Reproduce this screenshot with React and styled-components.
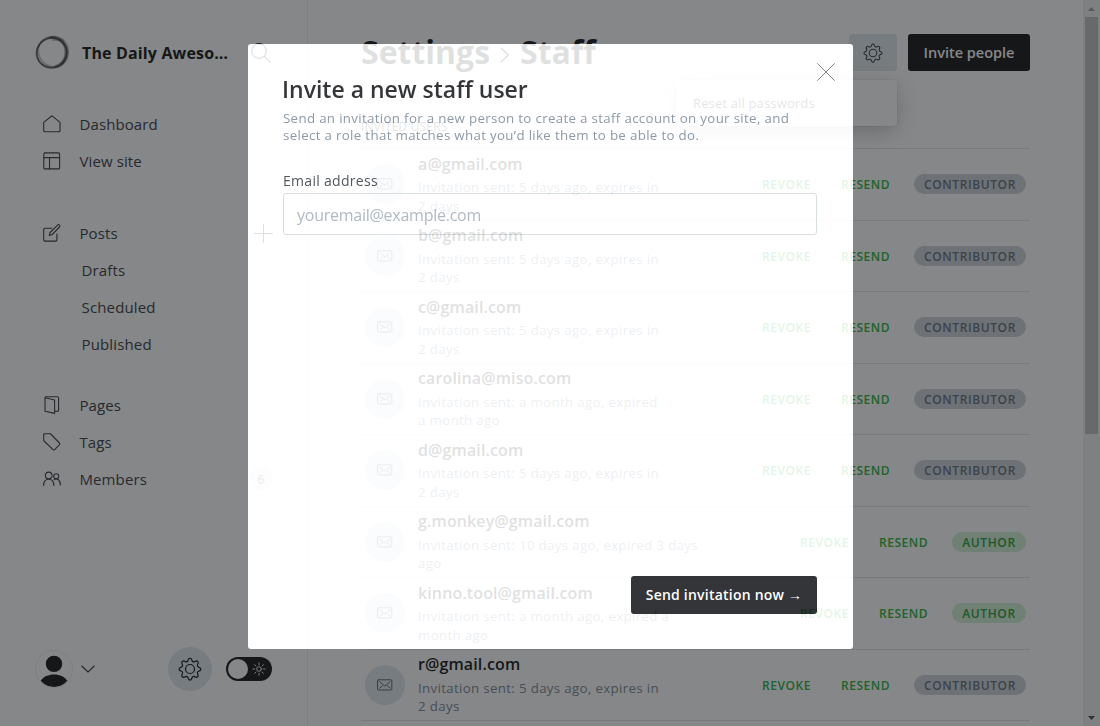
import React from "react";
import styled, { createGlobalStyle, css } from "styled-components";

const Global = createGlobalStyle`
  *, *::before, *::after { box-sizing: border-box; }
  html, body { margin: 0; padding: 0; height: 726px; overflow: hidden; }
  body {
    background: #fff;
    color: #15171a;
    font-family: "Open Sans", "Noto Sans", sans-serif;
    font-size: 15px;
  }
`;

const Page = styled.div`
  display: flex;
  width: 1100px;
  height: 726px;
  overflow: hidden;
  background: #fff;
`;

/* ---------- sidebar ---------- */

const Sidebar = styled.nav`
  display: flex;
  flex-direction: column;
  flex: 0 0 308px;
  height: 726px;
  padding: 35px 35px 35px 35px;
  border-right: 1px solid #ebeef0;
`;

const SiteHeader = styled.header`
  display: flex;
  align-items: center;
  height: 35px;
  margin-bottom: 36px;
`;

const SiteName = styled.div`
  width: 169px;
  margin-left: 12px;
  font-size: 16px;
  font-weight: 700;
  letter-spacing: 0.15px;
  line-height: 24px;
  white-space: nowrap;
`;

const MenuGroup = styled.ul`
  margin: 0 0 ${(p) => p.$gap}px;
  padding: 0;
  list-style: none;
`;

const MenuItem = styled.li`
  display: flex;
  align-items: center;
  height: 37px;
  padding-left: ${(p) => (p.$sub ? 46.5 : 8)}px;
  padding-bottom: 2px;
  color: #394047;
  font-size: 15px;
  line-height: 20px;
  letter-spacing: ${(p) => (p.$sub ? 0.15 : 0.1)}px;

  > svg { flex: none; margin-right: 18.5px; }
`;

const MenuLabel = styled.span`
  flex: 1;
`;

const PlusSlot = styled.span`
  display: flex;
  margin: 1px -1px 0 0;
`;

const Count = styled.span`
  display: flex;
  align-items: center;
  justify-content: center;
  width: 24px;
  height: 24px;
  margin-right: -1px;
  border-radius: 50%;
  background: #ebeef0;
  color: #7c8b9a;
  font-size: 13px;
  font-weight: 600;
`;

const SidebarFooter = styled.footer`
  display: flex;
  align-items: center;
  height: 44px;
  margin-top: auto;
`;

const UserAvatar = styled.div`
  display: flex;
  width: 38px;
  height: 38px;
  border: 1px solid #ebeef0;
  border-radius: 50%;
  overflow: hidden;
`;

const Chevron = styled.span`
  display: flex;
  margin-left: 8px;
`;

const RoundButton = styled.button`
  display: flex;
  align-items: center;
  justify-content: center;
  width: 44px;
  height: 44px;
  margin-left: 73px;
  padding: 0;
  border: 0;
  border-radius: 50%;
  background: #e1e9ee;
`;

const Toggle = styled.div`
  display: flex;
  align-items: center;
  justify-content: space-between;
  flex: none;
  width: 46px;
  height: 24px;
  margin-left: 14px;
  padding: 0 6px 0 2px;
  border-radius: 12px;
  background: #15171a;
`;

const Knob = styled.span`
  width: 20px;
  height: 20px;
  border-radius: 50%;
  background: #fff;
`;

/* ---------- main column ---------- */

const Main = styled.main`
  flex: 1;
  padding: 34px 53px 0;
`;

const TopBar = styled.header`
  display: flex;
  align-items: center;
  height: 37px;
`;

const Title = styled.h1`
  display: flex;
  align-items: center;
  flex: 1;
  margin: 0;
  padding-bottom: 2px;
  font-size: 32px;
  font-weight: 700;
  line-height: 35px;

  svg { margin: 6px 10px 0 10px; }
`;

const SettingsMenu = styled.div`
  position: relative;
`;

const GearButton = styled.button`
  display: flex;
  align-items: center;
  justify-content: center;
  width: 48px;
  height: 37px;
  padding: 0;
  border: 0;
  border-radius: 3px;
  background: #e1e9ee;
`;

const Dropdown = styled.div`
  position: absolute;
  top: 46px;
  right: 0;
  display: flex;
  align-items: center;
  width: 221px;
  height: 46px;
  padding-left: 17px;
  border-radius: 4px;
  background: #fff;
  box-shadow: 0 0 0 1px rgba(0, 0, 0, 0.04), 0 7px 20px -5px rgba(0, 0, 0, 0.15), 0 4px 30px rgba(0, 0, 0, 0.14);
  color: #394047;
  font-size: 13px;
  letter-spacing: 0.15px;
`;

const darkButton = css`
  display: flex;
  align-items: center;
  justify-content: center;
  padding: 0;
  border: 0;
  border-radius: 3px;
  background: #15171a;
  color: #fff;
  font-family: inherit;
  font-weight: 600;
  white-space: nowrap;
`;

const InviteButton = styled.button`
  ${darkButton}
  width: 122px;
  height: 37px;
  margin-left: 11px;
  font-size: 14.500px;
`;

const SectionLabel = styled.h2`
  display: flex;
  align-items: center;
  height: 20px;
  margin: 45px 0 12px;
  color: #394047;
  font-size: 12px;
  font-weight: 400;
  letter-spacing: 0.2px;
`;

const InviteList = styled.section`
  border-bottom: 1px solid #e3e7ea;
`;

const InviteRow = styled.article`
  display: flex;
  align-items: center;
  height: 71.5px;
  padding: 0 4px;
  border-top: 1px solid #e3e7ea;
`;

const MailBadge = styled.span`
  display: flex;
  align-items: center;
  justify-content: center;
  flex: none;
  width: 40px;
  height: 40px;
  margin-right: 13px;
  border-radius: 50%;
  background: #e1e9ee;
`;

const Invitee = styled.div`
  flex: 1;
`;

const Email = styled.h3`
  margin: 0 0 4.500px;
  font-size: 16px;
  font-weight: 600;
  line-height: 20px;
  letter-spacing: 0.12px;
`;

const Sent = styled.p`
  margin: 0;
  color: #7c8b9a;
  font-size: 13.300px;
  line-height: 18.5px;
  letter-spacing: 0.33px;
  white-space: pre-line;
`;

const Action = styled.a`
  width: 50px;
  margin-right: ${(p) => p.$after}px;
  padding-top: 1px;
  color: #2ab443;
  font-size: 12px;
  font-weight: 600;
  letter-spacing: 0.55px;
  white-space: nowrap;
`;

const Role = styled.span`
  display: flex;
  align-items: center;
  justify-content: center;
  width: ${(p) => (p.$author ? 74 : 112)}px;
  height: 20px;
  padding-top: 1px;
  border-radius: 10px;
  background: ${(p) => (p.$author ? "#d2f0d6" : "#ced4dc")};
  color: ${(p) => (p.$author ? "#27a03c" : "#66717e")};
  font-size: 12px;
  font-weight: 600;
  letter-spacing: 0.6px;
`;

/* ---------- scrollbar ---------- */

const ScrollTrack = styled.div`
  display: flex;
  flex-direction: column;
  align-items: center;
  justify-content: space-between;
  flex: 0 0 17px;
  height: 726px;
  background: #f1f1f1;
`;

const ScrollThumb = styled.div`
  width: 13px;
  height: 417px;
  margin-bottom: auto;
  background: #c1c1c1;
`;

const ScrollArrow = styled.span`
  display: flex;
  align-items: center;
  justify-content: center;
  height: 17px;
`;

/* ---------- dialog ---------- */

const Dialog = styled.section`
  position: fixed;
  top: 44px;
  left: 248px;
  display: flex;
  flex-direction: column;
  width: 605px;
  height: 605px;
  padding: 32px 36px 35px 35px;
  border-radius: 3px;
  background: #fff;
  box-shadow: 0 0 0 1000px rgba(21, 23, 26, 0.6);
  opacity: 0.87;
`;

const DialogTitle = styled.h2`
  margin: -1px 0 7px -1px;
  font-size: 23px;
  font-weight: 600;
  line-height: 28px;
`;

const DialogText = styled.p`
  margin: 0 0 27px;
  color: #7c8b9a;
  font-size: 13.300px;
  line-height: 17px;
  letter-spacing: 0.33px;
  white-space: pre-line;
`;

const CloseButton = styled.button`
  position: absolute;
  top: 19px;
  right: 18px;
  display: flex;
  padding: 0;
  border: 0;
  background: none;
`;

const Field = styled.label`
  display: flex;
  flex-direction: column;
  color: #394047;
  font-size: 14px;
  line-height: 20px;
  letter-spacing: 0.3px;
`;

const Input = styled.input`
  height: 42px;
  margin-top: 2px;
  padding: 2px 13px 0;
  border: 1px solid #d5dade;
  border-radius: 3px;
  background: #fff;
  font-family: inherit;
  font-size: 16px;
  letter-spacing: -0.25px;

  &::placeholder { color: #a4b0bd; opacity: 1; }
`;

const SendButton = styled.button`
  ${darkButton}
  align-self: flex-end;
  width: 186px;
  height: 38px;
  margin-top: auto;
  padding-bottom: 2px;
  font-size: 14px;
  letter-spacing: 0.22px;
`;

/* ---------- icons ---------- */

const Icon = ({ size = 18, color = "#394047", w = 1.1, box = size, children, h = size }) => (
  <svg width={size} height={h} viewBox={`0 0 ${box} ${h}`} fill="none" stroke={color} strokeWidth={w} strokeLinecap="round" strokeLinejoin="round">
    {children}
  </svg>
);

const HomeIcon = () => (
  <Icon><path d="M.7 7.4 9 .8l8 6.6v8.4a1 1 0 0 1-1 1H1.700a1 1 0 0 1-1-1z" /></Icon>
);
const SiteIcon = () => (
  <Icon><rect x=".8" y=".9" width="15.800" height="16" rx="1" /><path d="M.8 5.600h15.800M6.500 5.600v11.300" /></Icon>
);
const PostIcon = () => (
  <Icon>
    <path d="M8.800 4.300H1.700a1 1 0 0 0-1 1v10.800a1 1 0 0 0 1 1h11.200a1 1 0 0 0 1-1V10" />
    <path d="m6.300 11.500.8-3L14.600 1.100a1.300 1.300 0 0 1 1.900 1.900L9.200 10.500z" />
  </Icon>
);
const PagesIcon = () => (
  <Icon>
    <path d="M2 1.800v13.400l9.600 2.200V4z" />
    <path d="M2 1.800a1 1 0 0 1 1-1h11.600a1 1 0 0 1 1 1v12.400a1 1 0 0 1-1 1h-3" />
  </Icon>
);
const TagIcon = () => (
  <Icon><path d="M1.700.7H7a1 1 0 0 1 .7.3l8.800 9a1.200 1.200 0 0 1 0 1.600l-4.800 5a1.200 1.200 0 0 1-1.600 0L1 8a1 1 0 0 1-.3-.7V1.700a1 1 0 0 1 1-1z" /></Icon>
);
const MembersIcon = () => (
  <Icon>
    <circle cx="5.700" cy="5.400" r="3.300" /><circle cx="13.200" cy="6.300" r="2.500" />
    <path d="M.6 15.500c0-3.900 2-6.200 5.100-6.200s5.100 2.300 5.100 6.200M11.100 9.600c3.400-2 6.200.6 6.200 5.300" />
  </Icon>
);
const SearchIcon = () => (
  <Icon size={20} color="#15171a" w={1.2}><circle cx="8" cy="8" r="7.300" /><path d="m13.200 13.200 6.200 6.200" /></Icon>
);
const PlusIcon = () => (
  <Icon size={19} color="#15171a" w={1}><path d="M9.500 .5v18M.5 9.500h18" /></Icon>
);

const GearIcon = ({ size, w, color = "#15171a" }) => (
  <svg width={size} height={size} viewBox="0 0 24 24" fill="none" stroke={color} strokeWidth={w} strokeLinejoin="round">
    <circle cx="12" cy="12" r="4.500" />
    <path d="m13.500 2.300.6 1.400a1.800 1.800 0 0 0 2.300 1l1.400-.6a1.800 1.800 0 0 1 2.300 2.300l-.6 1.400a1.800 1.800 0 0 0 1 2.300l1.400.6a1.600 1.600 0 0 1 0 2.900l-1.400.6a1.800 1.800 0 0 0-1 2.300l.6 1.400a1.800 1.800 0 0 1-2.300 2.300l-1.400-.6a1.800 1.800 0 0 0-2.300 1l-.6 1.400a1.600 1.600 0 0 1-3 0l-.6-1.400a1.800 1.800 0 0 0-2.300-1l-1.400.6a1.800 1.800 0 0 1-2.300-2.300l.6-1.400a1.800 1.800 0 0 0-1-2.300l-1.400-.6a1.600 1.600 0 0 1 0-2.900l1.400-.6a1.800 1.800 0 0 0 1-2.300l-.6-1.400a1.800 1.800 0 0 1 2.300-2.300l1.400.6a1.800 1.800 0 0 0 2.300-1l.6-1.400a1.600 1.600 0 0 1 3 0z" />
  </svg>
);

const SunIcon = () => (
  <Icon size={14} color="#fff" w={0.9}>
    <circle cx="7" cy="7" r="2.300" />
    <path d="M7 .8v2M7 11.200v2M.8 7h2M11.200 7h2M2.600 2.600 4 4M10 10l1.400 1.400M11.400 2.600 10 4M4 10l-1.400 1.400" />
  </Icon>
);

const MailIcon = () => (
  <Icon size={16} h={12} color="#4a525a" w={0.85}>
    <rect x=".5" y=".8" width="14.300" height="10.200" rx="1" />
    <path d="m2.800 2.800 4 3.600a1.600 1.600 0 0 0 2.200 0l4-3.600M2.800 9l2.400-2M13 9l-2.400-2" />
  </Icon>
);

const Logo = () => (
  <svg width="35" height="35" viewBox="0 0 35 35" fill="none" stroke="#15171a">
    <circle cx="16.800" cy="18" r="15" strokeWidth="1.600" opacity=".5" />
    <ellipse cx="16.500" cy="17.500" rx="15.200" ry="14.400" strokeWidth="2" opacity=".35" transform="rotate(-35 16.500 17.500)" />
    <ellipse cx="18" cy="17" rx="15.600" ry="14.200" strokeWidth="1.800" opacity=".25" transform="rotate(50 18 17)" />
    <path d="M14 3C24 0 33.500 7 32.500 17S26 30.500 19 32" strokeWidth="2.600" opacity=".28" />
    <path d="M17 5c7-1.500 12.500 3.500 13 10s-1 11.500-5 14.500" strokeWidth="1.600" opacity=".35" />
    <path d="M15 2c5-1.500 11 .5 14 4" strokeWidth="1.400" opacity=".3" />
  </svg>
);

const UserIcon = () => (
  <svg width="36" height="36" viewBox="0 0 36 36" fill="#15171a">
    <circle cx="18" cy="12.900" r="8.200" />
    <path d="M4.600 29.800C7.500 25.500 12 23.400 18 23.400s10.500 2.100 13.400 6.400C28 34 23.500 36 18 36S8 34 4.600 29.800z" />
  </svg>
);

/* ---------- data ---------- */

const inFive = "Invitation sent: 5 days ago, expires in\n2 days";
const invites = [
  { email: "a@gmail.com", sent: inFive },
  { email: "b@gmail.com", sent: inFive },
  { email: "c@gmail.com", sent: inFive },
  { email: "carolina@miso.com", sent: "Invitation sent: a month ago, expired\na month ago" },
  { email: "d@gmail.com", sent: inFive },
  { email: "g.monkey@gmail.com", sent: "Invitation sent: 10 days ago, expired 3 days\nago", author: true },
  { email: "kinno.tool@gmail.com", sent: "Invitation sent: a month ago, expired a\nmonth ago", author: true },
  { email: "r@gmail.com", sent: inFive },
];

export default function App() {
  return (
    <>
      <Global />
      <Page>
        <Sidebar>
          <SiteHeader>
            <Logo />
            <SiteName>The Daily Aweso…</SiteName>
            <SearchIcon />
          </SiteHeader>
          <MenuGroup $gap={35}>
            <MenuItem><HomeIcon /><MenuLabel>Dashboard</MenuLabel></MenuItem>
            <MenuItem><SiteIcon /><MenuLabel>View site</MenuLabel></MenuItem>
          </MenuGroup>
          <MenuGroup $gap={24}>
            <MenuItem><PostIcon /><MenuLabel>Posts</MenuLabel><PlusSlot><PlusIcon /></PlusSlot></MenuItem>
            <MenuItem $sub>Drafts</MenuItem>
            <MenuItem $sub>Scheduled</MenuItem>
            <MenuItem $sub>Published</MenuItem>
          </MenuGroup>
          <MenuGroup $gap={0}>
            <MenuItem><PagesIcon /><MenuLabel>Pages</MenuLabel></MenuItem>
            <MenuItem><TagIcon /><MenuLabel>Tags</MenuLabel></MenuItem>
            <MenuItem><MembersIcon /><MenuLabel>Members</MenuLabel><Count>6</Count></MenuItem>
          </MenuGroup>
          <SidebarFooter>
            <UserAvatar><UserIcon /></UserAvatar>
            <Chevron><Icon size={14} h={8}><path d="m.8 1 6.200 6 6.200-6" /></Icon></Chevron>
            <RoundButton><GearIcon size={24} w={1.2} /></RoundButton>
            <Toggle><Knob /><SunIcon /></Toggle>
          </SidebarFooter>
        </Sidebar>

        <Main>
          <TopBar>
            <Title>
              Settings
              <Icon size={10} h={18} color="#15171a" w={1.4}><path d="m1.200 2.200 7 6.800-7 6.800" /></Icon>
              Staff
            </Title>
            <SettingsMenu>
              <GearButton><GearIcon size={20} w={1.3} color="#394047" /></GearButton>
              <Dropdown>Reset all passwords</Dropdown>
            </SettingsMenu>
            <InviteButton>Invite people</InviteButton>
          </TopBar>
          <SectionLabel>INVITED USERS</SectionLabel>
          <InviteList>
            {invites.map((i) => (
              <InviteRow key={i.email}>
                <MailBadge><MailIcon /></MailBadge>
                <Invitee>
                  <Email>{i.email}</Email>
                  <Sent>{i.sent}</Sent>
                </Invitee>
                <Action $after={29}>REVOKE</Action>
                <Action $after={23}>RESEND</Action>
                <Role $author={i.author}>{i.author ? "AUTHOR" : "CONTRIBUTOR"}</Role>
              </InviteRow>
            ))}
          </InviteList>
        </Main>

        <ScrollTrack>
          <ScrollArrow><svg width="7" height="4" viewBox="0 0 7 4"><path d="M0 4 3.500 0 7 4z" fill="#a3a3a3" /></svg></ScrollArrow>
          <ScrollThumb />
          <ScrollArrow><svg width="7" height="4" viewBox="0 0 7 4"><path d="M0 0 3.500 4 7 0z" fill="#505050" /></svg></ScrollArrow>
        </ScrollTrack>
      </Page>

      <Dialog>
        <DialogTitle>Invite a new staff user</DialogTitle>
        <DialogText>{"Send an invitation for a new person to create a staff account on your site, and\nselect a role that matches what you’d like them to be able to do."}</DialogText>
        <Field>
          Email address
          <Input placeholder="youremail@example.com" />
        </Field>
        <SendButton>Send invitation now →</SendButton>
        <CloseButton>
          <Icon size={18} color="#394047" w={0.7}><path d="m.5.500 17 17M17.500.5l-17 17" /></Icon>
        </CloseButton>
      </Dialog>
    </>
  );
}
